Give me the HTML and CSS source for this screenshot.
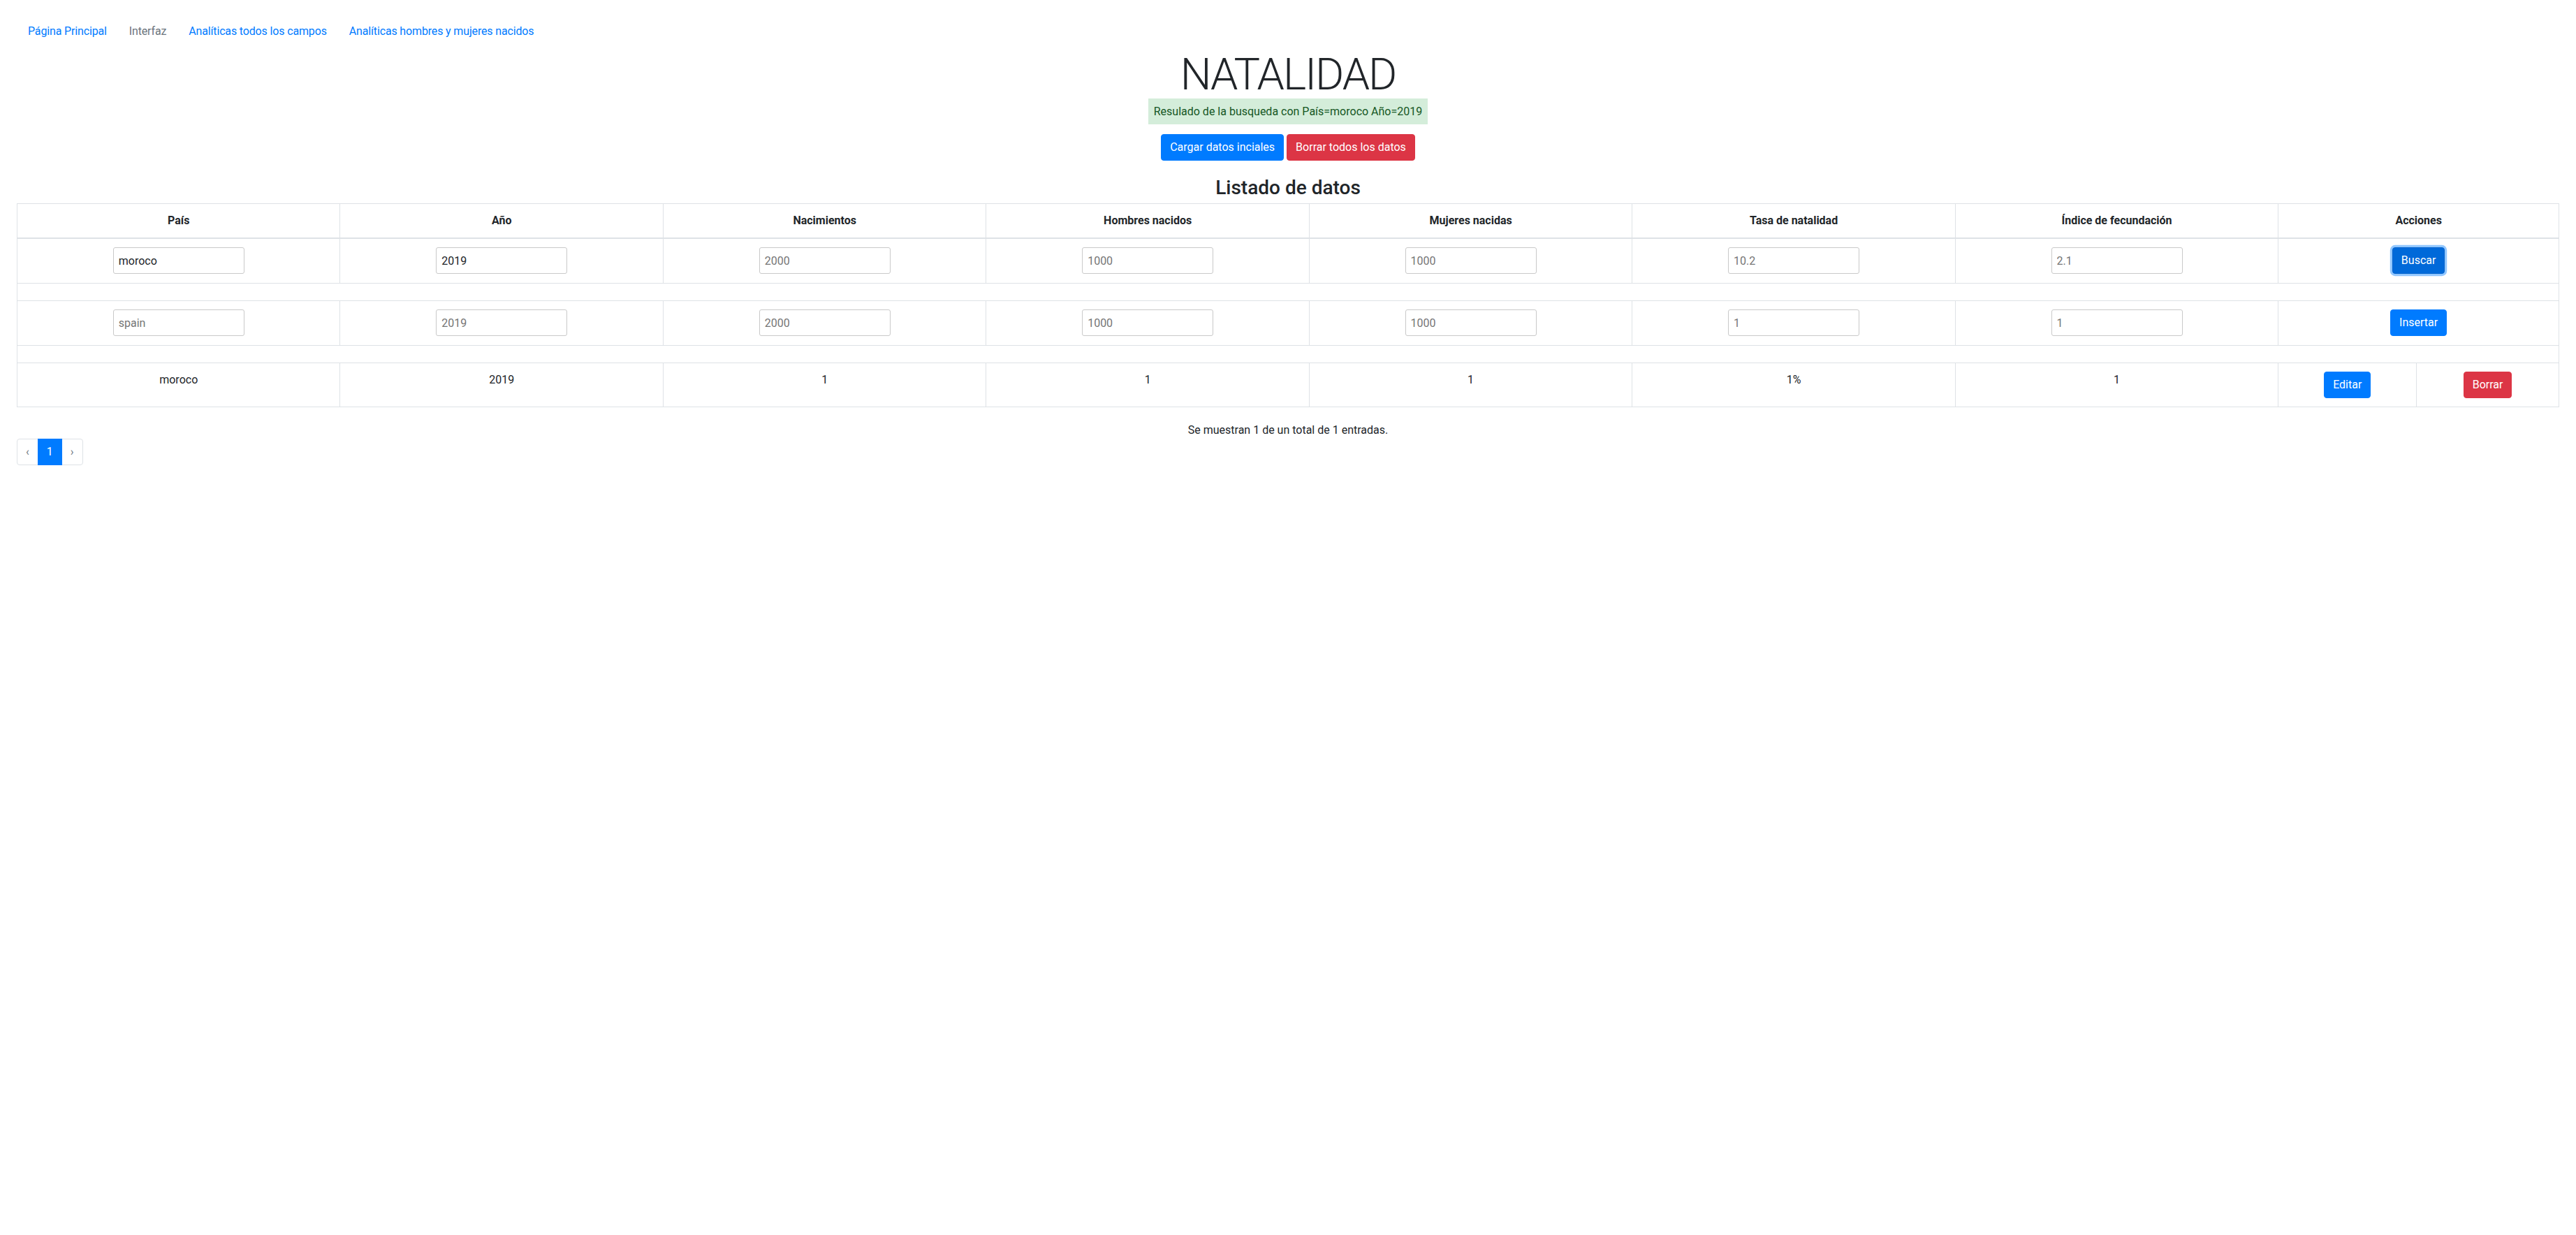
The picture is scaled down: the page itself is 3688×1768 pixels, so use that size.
FILE: index.html
```html
<!DOCTYPE html>
<html lang="es">
<head>
<meta charset="utf-8">
<title>Natalidad</title>
<link rel="stylesheet" href="styles.css">
</head>
<body>
<div class="page">
  <nav class="topnav">
    <a class="nav-link" href="#">Página Principal</a>
    <a class="nav-link muted" href="#">Interfaz</a>
    <a class="nav-link" href="#">Analíticas todos los campos</a>
    <a class="nav-link" href="#">Analíticas hombres y mujeres nacidos</a>
  </nav>

  <header class="hero">
    <h1 class="title">NATALIDAD</h1>
    <div class="result">Resulado de la busqueda con País=moroco Año=2019</div>
    <div class="actions">
      <button class="btn btn-primary">Cargar datos inciales</button>
      <button class="btn btn-danger">Borrar todos los datos</button>
    </div>
    <h3 class="list-title">Listado de datos</h3>
  </header>

  <table class="data">
    <colgroup>
      <col class="c-data"><col class="c-data"><col class="c-data"><col class="c-data">
      <col class="c-data"><col class="c-data"><col class="c-data">
      <col class="c-edit"><col class="c-del">
    </colgroup>
    <thead>
      <tr>
        <th>País</th>
        <th>Año</th>
        <th>Nacimientos</th>
        <th>Hombres nacidos</th>
        <th>Mujeres nacidas</th>
        <th>Tasa de natalidad</th>
        <th>Índice de fecundación</th>
        <th colspan="2">Acciones</th>
      </tr>
    </thead>
    <tbody>
      <tr class="input-row">
        <td><input class="field" type="text" value="moroco"></td>
        <td><input class="field" type="text" value="2019"></td>
        <td><input class="field" type="text" placeholder="2000"></td>
        <td><input class="field" type="text" placeholder="1000"></td>
        <td><input class="field" type="text" placeholder="1000"></td>
        <td><input class="field" type="text" placeholder="10.2"></td>
        <td><input class="field" type="text" placeholder="2.1"></td>
        <td colspan="2"><button class="btn btn-primary is-focused">Buscar</button></td>
      </tr>
      <tr class="spacer"><td colspan="9"></td></tr>
      <tr class="input-row">
        <td><input class="field" type="text" placeholder="spain"></td>
        <td><input class="field" type="text" placeholder="2019"></td>
        <td><input class="field" type="text" placeholder="2000"></td>
        <td><input class="field" type="text" placeholder="1000"></td>
        <td><input class="field" type="text" placeholder="1000"></td>
        <td><input class="field" type="text" placeholder="1"></td>
        <td><input class="field" type="text" placeholder="1"></td>
        <td colspan="2"><button class="btn btn-primary">Insertar</button></td>
      </tr>
      <tr class="spacer"><td colspan="9"></td></tr>
      <tr>
        <td>moroco</td>
        <td>2019</td>
        <td>1</td>
        <td>1</td>
        <td>1</td>
        <td>1%</td>
        <td>1</td>
        <td><button class="btn btn-primary">Editar</button></td>
        <td><button class="btn btn-danger">Borrar</button></td>
      </tr>
    </tbody>
  </table>

  <p class="summary">Se muestran 1 de un total de 1 entradas.</p>

  <ul class="pagination">
    <li class="page-item"><span class="page-link disabled">‹</span></li>
    <li class="page-item"><span class="page-link active">1</span></li>
    <li class="page-item"><span class="page-link disabled">›</span></li>
  </ul>
</div>
</body>
</html>
```

FILE: styles.css
```css
* { box-sizing: border-box; }

html, body {
  margin: 0;
  padding: 0;
  background: #fff;
}

body {
  font-family: Roboto, "Noto Sans", "Liberation Sans", sans-serif;
  font-size: 16px;
  line-height: 24px;
  color: #212529;
}

.page {
  padding: 25px 24px 0;
}

/* nav */
.topnav {
  display: flex;
}

.nav-link {
  display: block;
  padding: 8px 16px;
  color: #007bff;
  text-decoration: none;
  letter-spacing: -0.15px;
}

.nav-link.muted {
  color: #6c757d;
}

/* header block */
.hero {
  display: flex;
  flex-direction: column;
  align-items: center;
}

.title {
  margin: 10px 0 3px;
  font-size: 63px;
  line-height: 63px;
  font-weight: 300;
  letter-spacing: -2px;
  color: #212529;
}

.result {
  padding: 6.5px 8px;
  background: #d4edda;
  color: #155724;
}

.actions {
  display: flex;
  gap: 4px;
  margin-top: 14px;
}

.list-title {
  margin: 22px 0 5.5px;
  font-size: 28px;
  line-height: 1.2;
  font-weight: 500;
}

/* buttons */
.btn {
  display: inline-block;
  vertical-align: top;
  font-family: inherit;
  font-size: 16px;
  line-height: 24px;
  padding: 6px 12px;
  border: 1px solid transparent;
  border-radius: 4px;
  color: #fff;
  cursor: pointer;
}

.btn-primary {
  background: #007bff;
  border-color: #007bff;
}

.btn-primary.is-focused {
  background: #0069d9;
  border-color: #0062cc;
  box-shadow: 0 0 0 3.2px rgba(38, 143, 255, 0.5);
}

.btn-danger {
  background: #dc3545;
  border-color: #dc3545;
}

/* table */
.data {
  width: 100%;
  table-layout: fixed;
  border-collapse: collapse;
  border: 1px solid #dee2e6;
  margin-bottom: 21px;
}

.c-data { width: 12.71%; }
.c-edit { width: 5.44%; }
.c-del { width: 5.6%; }

.data th,
.data td {
  border: 1px solid #dee2e6;
  padding: 12px;
  text-align: center;
  vertical-align: top;
}

.data .input-row td {
  padding-bottom: 13px;
}

.data thead th {
  font-weight: 700;
  vertical-align: bottom;
  border-bottom: 2px solid #dee2e6;
}

.field {
  display: block;
  margin: 0 auto;
  width: 188px;
  height: 38px;
  padding: 0 7px;
  border: 1px solid #c9c9c9;
  border-radius: 3px;
  font-family: inherit;
  font-size: 16px;
  color: #212529;
  background: #fff;
}

.field::placeholder {
  color: #757575;
}

/* footer */
.summary {
  margin: 0;
  text-align: center;
  line-height: 24px;
}

.pagination {
  display: flex;
  list-style: none;
  margin: 0;
  padding: 0;
}

.page-link {
  display: block;
  padding: 8px 12px;
  line-height: 20px;
  border: 1px solid #dee2e6;
  margin-left: -1px;
  color: #6c757d;
  background: #fff;
}

.page-item:first-child .page-link {
  margin-left: 0;
  border-radius: 4px 0 0 4px;
}

.page-item:last-child .page-link {
  border-radius: 0 4px 4px 0;
}

.page-link.active {
  background: #007bff;
  border-color: #007bff;
  color: #fff;
  position: relative;
  z-index: 1;
}
```
